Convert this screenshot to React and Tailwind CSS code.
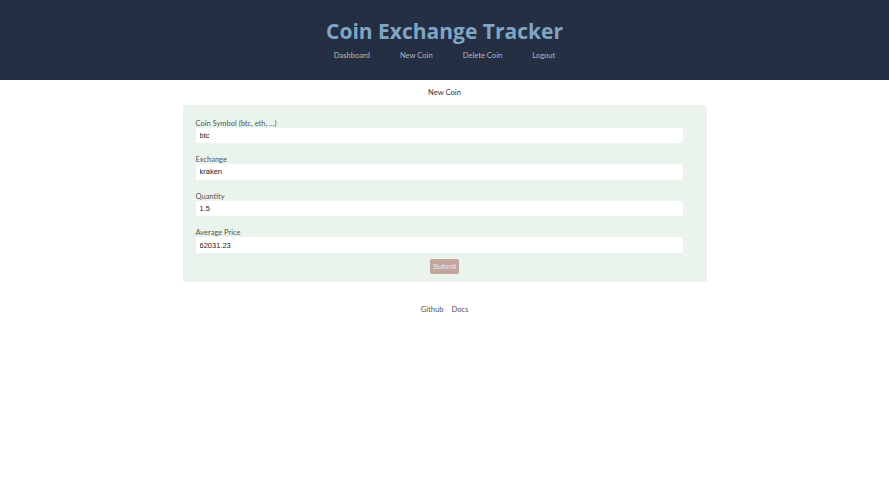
import React from 'react';

const fields = [
    { label: 'Coin Symbol (btc, eth, ...)', value: 'btc' },
    { label: 'Exchange', value: 'kraken' },
    { label: 'Quantity', value: '1.5' },
    { label: 'Average Price', value: '62031.23' },
];

export default function App() {
    return (
        <div className="min-h-screen bg-white font-['Lato',sans-serif]">
            {/* Header */}
            <header className="bg-[#252f44] h-[80px] flex flex-col items-center pt-[17px]">
                <h1 className="text-[21px] font-bold text-[#7ea6c4] leading-[28px] font-['Open_Sans',sans-serif]">Coin Exchange Tracker</h1>
                <nav className="flex gap-[30px] mt-[5px] text-[7.6px] leading-[10px] text-[#b3b6bd]">
                    <a href="#">Dashboard</a>
                    <a href="#">New Coin</a>
                    <a href="#">Delete Coin</a>
                    <a href="#">Logout</a>
                </nav>
            </header>

            {/* Form */}
            <main className="flex flex-col items-center">
                <h2 className="text-[7.6px] leading-[10px] text-[#333] mt-[7px]">New Coin</h2>
                <form className="w-[524px] bg-[#ebf4ec] mt-[8px] px-[13px] pt-[13.5px] pb-[8px] flex flex-col items-center">
                    {fields.map((f, i) => (
                        <div key={f.label} className={i < fields.length - 1 ? "w-full flex flex-col pr-[11px] h-[36.6px]" : "w-full flex flex-col pr-[11px]"}>
                            <label className="text-[7.5px] text-[#555] leading-[9px]">{f.label}</label>
                            <input
                                type="text"
                                defaultValue={f.value}
                                className="bg-white h-[15.5px] px-[4px] text-[7.5px] text-[#222] font-['Liberation_Sans',sans-serif] outline-none"
                            />
                        </div>
                    ))}
                    <button type="submit" className="mt-[6px] bg-[#c2a59d] text-[#f3ebe8] text-[7.5px] px-[3px] h-[15px] rounded-[2px] font-['Liberation_Sans',sans-serif]">
                        Submit
                    </button>
                </form>

                {/* Footer */}
                <footer className="flex gap-[8px] mt-[22px] text-[7.6px] leading-[10px] text-[#555]">
                    <a href="#">Github</a>
                    <a href="#">Docs</a>
                </footer>
            </main>
        </div>
    );
}
